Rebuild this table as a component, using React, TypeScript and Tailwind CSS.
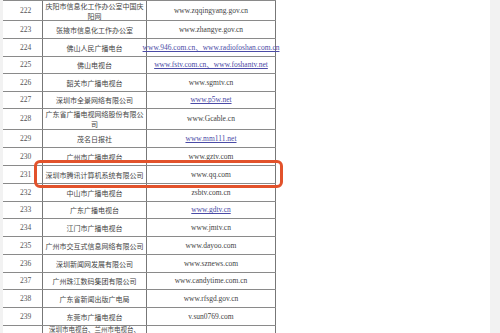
import React from "react";

type Row = { no: number; name: React.ReactNode; url: string; link?: boolean; h: string };

const rows: Row[] = [
  { no: 222, name: <>庆阳市信息化工作办公室中国庆<br />阳网</>, url: "www.zqqingyang.gov.cn", h: "h-[20px]" },
  { no: 223, name: "张掖市信息化工作办公室", url: "www.zhangye.gov.cn", h: "h-[18px]" },
  { no: 224, name: "佛山人民广播电台", url: "www.946.com.cn、www.radiofoshan.com.cn", link: true, h: "h-[18px]" },
  { no: 225, name: "佛山电视台", url: "www.fstv.com.cn、www.foshantv.net", link: true, h: "h-[17px]" },
  { no: 226, name: "韶关市广播电视台", url: "www.sgmtv.cn", h: "h-[18px]" },
  { no: 227, name: "深圳市全景网络有限公司", url: "www.p5w.net", link: true, h: "h-[17px]" },
  { no: 228, name: <>广东省广播电视网络股份有限公<br />司</>, url: "www.Gcable.cn", h: "h-[21px]" },
  { no: 229, name: "茂名日报社", url: "www.mm111.net", link: true, h: "h-[18px]" },
  { no: 230, name: "广州市广播电视台", url: "www.gztv.com", h: "h-[18px]" },
  { no: 231, name: "深圳市腾讯计算机系统有限公司", url: "www.qq.com", h: "h-[18px]" },
  { no: 232, name: "中山市广播电视台", url: "zsbtv.com.cn", h: "h-[18px]" },
  { no: 233, name: "广东广播电视台", url: "www.gdtv.cn", link: true, h: "h-[17px]" },
  { no: 234, name: "江门市广播电视台", url: "www.jmtv.cn", h: "h-[18px]" },
  { no: 235, name: "广州市交互式信息网络有限公司", url: "www.dayoo.com", h: "h-[18px]" },
  { no: 236, name: "深圳新闻网发展有限公司", url: "www.sznews.com", h: "h-[18px]" },
  { no: 237, name: "广州珠江数码集团有限公司", url: "www.candytime.com.cn", h: "h-[17px]" },
  { no: 238, name: "广东省新闻出版广电局", url: "www.rfsgd.gov.cn", h: "h-[18px]" },
  { no: 239, name: "东莞市广播电视台", url: "v.sun0769.com", h: "h-[18px]" },
];

const serif = "font-['Liberation_Serif','Noto_Sans_CJK_SC',serif]";
const cjk = "font-['Noto_Sans_CJK_SC',sans-serif]";

export default function App() {
  return (
    <div className="flex w-[500px] h-[333px] overflow-hidden bg-white">
      <div className="w-[3px] bg-[#f2f2f2]" />
      <div className="relative w-[487px]">
        {/* table */}
        <div className="w-[273px] border-t border-[#8a8a8a]">
          {rows.map((r) => (
            <div key={r.no} className={`flex ${r.h} border-b border-[#8a8a8a]`}>
              <div className={`w-[39px] pl-[6px] flex items-center justify-center text-[7.5px] text-[#555] ${serif}`}>
                {r.no}
              </div>
              <div className={`w-[104px] border-l border-[#777] px-[2px] flex items-center justify-center text-center leading-[10px] text-[7px] text-[#444] ${cjk}`}>
                {r.name}
              </div>
              <div className={`w-[130px] border-x border-[#777] flex items-center justify-center whitespace-nowrap text-[7.5px] ${serif} ${r.link ? "text-[#4b4ba6] underline" : "text-[#444]"}`}>
                {r.url}
              </div>
            </div>
          ))}
          {/* partial last row */}
          <div className="flex h-[8px]">
            <div className="w-[39px]" />
            <div className={`w-[104px] border-l border-[#777] flex justify-center leading-[7px] text-[6.5px] text-[#444] ${cjk}`}>
              深圳市电视台、兰州市电视台、
            </div>
            <div className="w-[130px] border-x border-[#777]" />
          </div>
        </div>
        {/* highlight */}
        <div className="absolute left-[31px] top-[160px] w-[249px] h-[28px] rounded-[6px] border-[3px] border-[#e2522b]" />
      </div>
      <div className="w-[10px] bg-[#f2f2f2]" />
    </div>
  );
}
